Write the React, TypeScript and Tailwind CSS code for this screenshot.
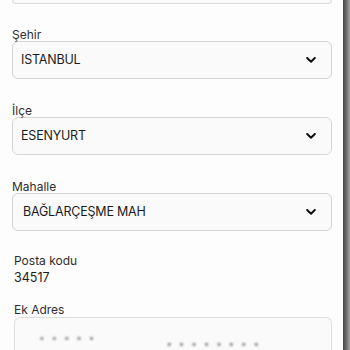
import React from "react";

const font = { fontFamily: 'Inter, "Liberation Sans", Arial, sans-serif' };

function Chevron() {
  return (
    <svg width="10" height="6" viewBox="0 0 10 6" fill="none" className="shrink-0">
      <path d="M1.2 1 5 4.8 8.8 1" stroke="#111" strokeWidth="2" strokeLinecap="round" strokeLinejoin="round" />
    </svg>
  );
}

type SelectFieldProps = {
  label: string;
  value: string;
  className?: string;
  pad?: string;
};

function SelectField({ label, value, className = "", pad = "pl-[8px]" }: SelectFieldProps) {
  return (
    <div className={className}>
      <p className="text-[12px] leading-[13px] text-[#2e2e2e]">{label}</p>
      <div
        className={`flex h-[38px] items-center justify-between rounded-[6px] border border-[#d5d5d5] bg-[#fafafa] ${pad} pr-[15px]`}
      >
        <span className="text-[12.5px] tracking-[-0.2px] text-[#1b1b1b]">{value}</span>
        <Chevron />
      </div>
    </div>
  );
}

export default function App() {
  return (
    <div className="flex h-[350px] w-[350px] overflow-hidden bg-[#fdfdfd]" style={font}>
      <div className="flex-1 pl-[12px] pr-[11px]">
        <div className="h-[4px] rounded-b-[6px] border border-t-0 border-[#dadada] bg-[#fafafa]" />

        <SelectField label="Şehir" value="ISTANBUL" className="mt-[24px]" />
        <SelectField label="İlçe" value="ESENYURT" className="mt-[25px]" />
        <SelectField label="Mahalle" value="BAĞLARÇEŞME MAH" className="mt-[25px]" pad="pl-[10px]" />

        <div className="mt-[23px] pl-[2px]">
          <p className="text-[12px] leading-[13px] text-[#2e2e2e]">Posta kodu</p>
          <p className="mt-[3px] text-[12.5px] leading-[16px] text-[#1b1b1b]">34517</p>
        </div>

        <div className="mt-[17px] pl-[2px]">
          <p className="text-[12px] leading-[13px] text-[#2e2e2e]">Ek Adres</p>
          <div className="mt-[1px] h-[40px] rounded-t-[6px] border border-b-0 border-[#dedede] bg-[#fafafa] pt-[12px] pl-[24px]">
            <div className="flex gap-[70px] text-[10px] tracking-[2px] text-[#8a8a8a] blur-[1px]">
              <span>• • ▪ ▪ ▪</span>
              <span className="mt-[6px]">▪ ▪ ▪ ▪ ▪ ▪ ▪ ▪</span>
            </div>
          </div>
        </div>
      </div>
      <div className="w-[7px] bg-gradient-to-r from-[#474747] via-[#6e6e6e] to-[#a8a8a8]" />
    </div>
  );
}
